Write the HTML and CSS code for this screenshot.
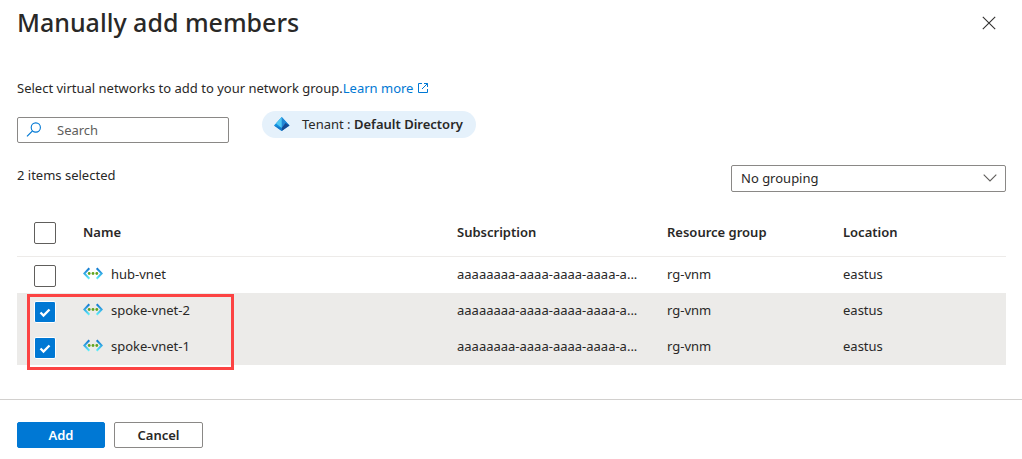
FILE: index.html
```html
<!DOCTYPE html>
<html lang="en">
<head>
<meta charset="utf-8">
<title>Manually add members</title>
<link rel="stylesheet" href="styles.css">
</head>
<body>
<svg class="defs" aria-hidden="true">
  <defs>
    <linearGradient id="arrow" x1="0" y1="0" x2="0" y2="1">
      <stop offset="0" stop-color="#1078d0"/>
      <stop offset=".5" stop-color="#35a9e4"/>
      <stop offset="1" stop-color="#5df0fb"/>
    </linearGradient>
    <symbol id="vnet" viewBox="0 0 20 14">
      <path d="M6.3 1.200 1.300 6.500l5 5.300M13.700 1.200l5 5.300-5 5.300" fill="none" stroke="url(#arrow)" stroke-width="2"/>
      <circle cx="6.200" cy="6.500" r="1.400" fill="#62a420"/>
      <circle cx="10" cy="6.500" r="1.400" fill="#62a420"/>
      <circle cx="13.800" cy="6.500" r="1.400" fill="#62a420"/>
    </symbol>
  </defs>
</svg>
<main class="panel">
  <header class="panel-header">
    <h1 class="title">Manually add members</h1>
    <button class="close" type="button" aria-label="Close">
      <svg width="14" height="14" viewBox="0 0 14 14"><path d="M.8.8l12.400 12.400M13.200.8.8 13.200" fill="none" stroke="#323130" stroke-width="1.100"/></svg>
    </button>
  </header>

  <p class="intro">Select virtual networks to add to your network group.<a class="link" href="#">Learn more <svg width="12" height="12" viewBox="0 0 12 12"><path d="M5 1.500H1.500v9h9V7M7 1.500h3.500V5M10.500 1.500 5 7" fill="none" stroke="#0078d4" stroke-width="1"/></svg></a></p>

  <div class="filters">
    <label class="search">
      <svg width="16" height="16" viewBox="0 0 16 16"><circle cx="9.800" cy="5.500" r="4.600" fill="none" stroke="#0078d4" stroke-width="1.100"/><path d="M6.500 8.800 1 14.300" stroke="#0078d4" stroke-width="1.200"/></svg>
      <input class="search-input" type="text" placeholder="Search" aria-label="Search">
    </label>
    <button class="pill" type="button">
      <svg width="16" height="14" viewBox="0 0 16 14">
        <path d="M7.700 0 0 8.500 7.700 14 15.500 8.500z" fill="#1490df"/>
        <path d="M7.700 0 2 6.400 7.700 11 10.600 6.200z" fill="#50c8f2"/>
        <path d="M7.700 0 15.500 8.500 11.500 6.500 7.700 11z" fill="#2386d5"/>
        <path d="M11.500 6 15.500 8.500 7.700 14V11z" fill="#174a94"/>
        <path d="M0 8.500 7.700 11v3z" fill="#1677c8"/>
      </svg>
      <span>Tenant : <b>Default Directory</b></span>
    </button>
  </div>

  <div class="summary">
    <span>2 items selected</span>
    <div class="dropdown">
      <select class="select" aria-label="Grouping"><option>No grouping</option></select>
      <svg class="chevron" width="14" height="8" viewBox="0 0 14 8"><path d="M.7.700 7 7 13.300.7" fill="none" stroke="#605e5c" stroke-width="1.100"/></svg>
    </div>
  </div>

  <div class="table-wrap">
    <table class="grid">
      <colgroup><col class="col-check"><col><col class="col-sub"><col class="col-group"><col class="col-loc"></colgroup>
      <thead>
        <tr>
          <th class="check"><input class="box" type="checkbox" aria-label="Select all"></th>
          <th>Name</th><th>Subscription</th><th>Resource group</th><th>Location</th>
        </tr>
      </thead>
      <tbody>
        <tr>
          <td class="check"><input class="box" type="checkbox" id="hub"></td>
          <td><label class="name" for="hub"><svg width="20" height="14"><use href="#vnet"/></svg>hub-vnet</label></td>
          <td>aaaaaaaa-aaaa-aaaa-aaaa-a...</td><td>rg-vnm</td><td>eastus</td>
        </tr>
        <tr class="selected">
          <td class="check"><input class="box" type="checkbox" id="spoke2" checked></td>
          <td><label class="name" for="spoke2"><svg width="20" height="14"><use href="#vnet"/></svg>spoke-vnet-2</label></td>
          <td>aaaaaaaa-aaaa-aaaa-aaaa-a...</td><td>rg-vnm</td><td>eastus</td>
        </tr>
        <tr class="selected">
          <td class="check"><input class="box" type="checkbox" id="spoke1" checked></td>
          <td><label class="name" for="spoke1"><svg width="20" height="14"><use href="#vnet"/></svg>spoke-vnet-1</label></td>
          <td>aaaaaaaa-aaaa-aaaa-aaaa-a...</td><td>rg-vnm</td><td>eastus</td>
        </tr>
      </tbody>
    </table>
    <div class="highlight"></div>
  </div>

  <footer class="actions">
    <button class="btn primary" type="button">Add</button>
    <button class="btn" type="button">Cancel</button>
  </footer>
</main>
</body>
</html>
```

FILE: styles.css
```css
* { box-sizing: border-box; }
body {
  margin: 0;
  background: #fff;
  color: #292827;
  font: 13px/20px "Noto Sans", "Open Sans", sans-serif;
}
button, input, select { font: inherit; color: inherit; }
svg { flex: none; }
.defs { position: absolute; width: 0; height: 0; }
.panel-header {
  display: flex;
  justify-content: space-between;
  align-items: flex-end;
  padding: 6px 26px 0 17px;
}
.title { margin: 0; font-size: 25px; line-height: 32px; font-weight: 500; }
.close { display: flex; padding: 0 0 8px; border: 0; background: none; }
.intro { margin: 40px 17px 0; }
.link { color: #0078d4; text-decoration: none; }
.link svg { vertical-align: -1px; }
.filters { display: flex; gap: 33px; padding: 13px 17px 0; align-items: flex-start; }
.search {
  display: flex;
  align-items: center;
  gap: 15px;
  width: 212px;
  height: 26px;
  margin-top: 6px;
  padding: 0 8px;
  border: 1px solid #8a8886;
  border-radius: 2px;
}
.search-input { flex: 1; min-width: 0; padding: 0; border: 0; outline: 0; background: none; }
.search-input::placeholder { color: #605e5c; opacity: 1; }
.pill {
  display: flex;
  align-items: center;
  gap: 12px;
  height: 27px;
  padding: 0 13px 1px 12px;
  border: 0;
  border-radius: 14px;
  background: #e5f1fb;
}
.pill b { font-weight: 600; }
.summary {
  display: flex;
  justify-content: space-between;
  align-items: flex-start;
  padding: 22px 16px 0 17px;
}
.dropdown { position: relative; width: 275px; }
.select {
  display: block;
  appearance: none;
  width: 100%;
  height: 27px;
  padding: 0 30px 2px 9px;
  border: 1px solid #8a8886;
  border-radius: 2px;
  background: #fff;
}
.chevron { position: absolute; right: 9px; top: 9px; pointer-events: none; }
.table-wrap { position: relative; margin: 17px 16px 0 17px; }
.grid { width: 100%; table-layout: fixed; border-collapse: separate; border-spacing: 0; }
.col-check { width: 66px; }
.col-sub { width: 210px; }
.col-group { width: 176px; }
.col-loc { width: 163px; }
th, td { height: 36px; padding: 0 0 2px; text-align: left; vertical-align: middle; white-space: nowrap; }
th { height: 48px; font-weight: 600; border-bottom: 1px solid #edebe9; }
.check { padding: 0 0 0 17px; }
td.check { padding-top: 2px; }
.selected { background: #ecebe9; }
.name { display: flex; align-items: center; gap: 8px; }
.box {
  display: block;
  appearance: none;
  width: 22px;
  height: 22px;
  margin: 0;
  border: 1px solid #605e5c;
  border-radius: 2px;
  background: #fff;
}
.box:checked {
  border-color: #fff;
  background: #0078d4 url("data:image/svg+xml,%3Csvg xmlns='http://www.w3.org/2000/svg' viewBox='0 0 20 20'%3E%3Cpath d='M5.500 10.500l3 3 6-6' fill='none' stroke='white' stroke-width='2.300'/%3E%3C/svg%3E") center / 20px 20px no-repeat;
}
.highlight {
  position: absolute;
  left: 10px;
  top: 85px;
  width: 207px;
  height: 76px;
  border: 3px solid #fc4343;
}
.actions {
  display: flex;
  gap: 9px;
  margin-top: 34px;
  padding: 22px 17px 10px;
  border-top: 1px solid #d2d0ce;
}
.btn {
  width: 89px;
  height: 26px;
  padding: 0;
  border: 1px solid #8a8886;
  border-radius: 2px;
  background: #fff;
  font-weight: 600;
}
.primary { width: 88px; border-color: #0078d4; background: #0078d4; color: #fff; }
```
